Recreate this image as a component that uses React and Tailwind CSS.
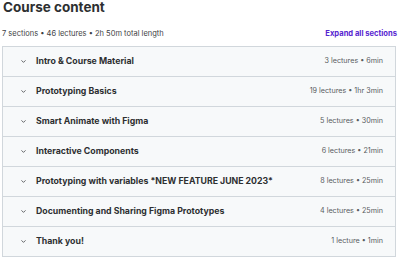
import { ChevronDown } from "lucide-react";

const sections = [
  { title: "Intro & Course Material", meta: "3 lectures • 6min" },
  { title: "Prototyping Basics", meta: "19 lectures • 1hr 3min" },
  { title: "Smart Animate with Figma", meta: "5 lectures • 30min" },
  { title: "Interactive Components", meta: "6 lectures • 21min" },
  { title: "Prototyping with variables *NEW FEATURE JUNE 2023*", meta: "8 lectures • 25min" },
  { title: "Documenting and Sharing Figma Prototypes", meta: "4 lectures • 25min" },
  { title: "Thank you!", meta: "1 lecture • 1min" },
];

export default function App() {
  return (
    <div className="w-[400px] h-[258px] bg-white overflow-hidden text-[#2d2f31]" style={{ fontFamily: "Inter, 'Noto Sans', sans-serif" }}>
      {/* Heading */}
      <h2 className="text-[13.5px] leading-[14px] font-bold pl-[3px]">Course content</h2>

      {/* Summary + expand */}
      <div className="flex justify-between items-center mt-[14px] h-[12px] pl-[2px] pr-[3px]">
        <span className="text-[7.5px] text-[#3e4143]">7 sections • 46 lectures • 2h 50m total length</span>
        <button className="text-[7.6px] font-bold text-[#5624d0]">Expand all sections</button>
      </div>

      {/* Sections */}
      <div className="mt-[6px] ml-[2px] mr-[4px] border border-[#d1d7dc]">
        {sections.map((s, i) => (
          <div
            key={s.title}
            className={`flex items-center justify-between h-[29px] bg-[#f7f9fa] pl-[17px] pr-[12px] ${
              i > 0 ? "border-t border-[#d1d7dc] h-[30px]" : ""
            }`}
          >
            <div className="flex items-center gap-[9px]">
              <ChevronDown className="w-[7px] h-[7px]" strokeWidth={2.5} />
              <span className="text-[8.75px] font-bold">{s.title}</span>
            </div>
            <span className="text-[7.2px] text-[#595c5f]">{s.meta}</span>
          </div>
        ))}
      </div>
    </div>
  );
}
